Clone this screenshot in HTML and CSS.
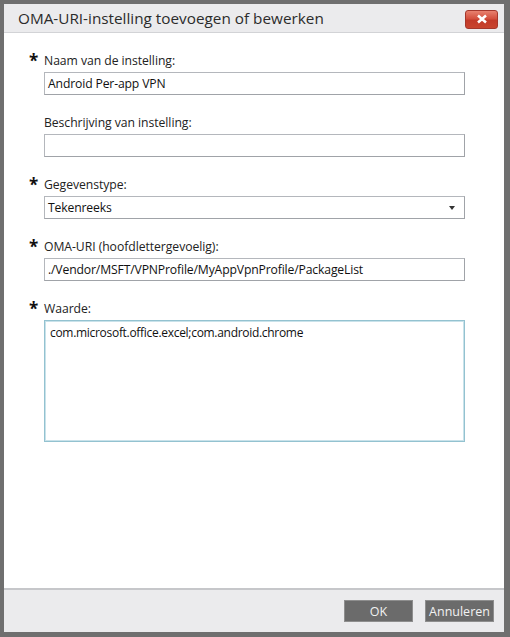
FILE: index.html
```html
<!DOCTYPE html>
<html lang="nl">
<head>
<meta charset="utf-8">
<title>OMA-URI-instelling</title>
<link rel="stylesheet" href="styles.css">
</head>
<body>
<div class="frame">
  <div class="titlebar">
    <div class="title">OMA-URI-instelling toevoegen of bewerken</div>
    <div class="close">
      <svg width="12" height="10" viewBox="0 0 12 10"><path d="M2 1.5 L10 8.5 M10 1.5 L2 8.5" stroke="#fff" stroke-width="2.6" stroke-linecap="butt"/></svg>
    </div>
  </div>
  <div class="content">
    <div class="field">
      <div class="label-row"><span class="req">*</span><span>Naam van de instelling:</span></div>
      <div class="input">Android Per-app VPN</div>
    </div>
    <div class="field">
      <div class="label-row"><span class="req"></span><span>Beschrijving van instelling:</span></div>
      <div class="input"></div>
    </div>
    <div class="field">
      <div class="label-row"><span class="req">*</span><span>Gegevenstype:</span></div>
      <div class="input select"><span>Tekenreeks</span><span class="arrow"></span></div>
    </div>
    <div class="field">
      <div class="label-row"><span class="req">*</span><span>OMA-URI (hoofdlettergevoelig):</span></div>
      <div class="input">./Vendor/MSFT/VPNProfile/MyAppVpnProfile/PackageList</div>
    </div>
    <div class="field">
      <div class="label-row"><span class="req">*</span><span>Waarde:</span></div>
      <div class="textarea">com.microsoft.office.excel;com.android.chrome</div>
    </div>
  </div>
  <div class="footer">
    <div class="btn ok">OK</div>
    <div class="btn">Annuleren</div>
  </div>
</div>
</body>
</html>
```
FILE: styles.css
```css
html, body {
  margin: 0;
  padding: 0;
}
body {
  width: 510px;
  height: 637px;
  font-family: "Segoe UI", "Open Sans", "Noto Sans", sans-serif;
  color: #222;
}
.frame {
  box-sizing: border-box;
  width: 510px;
  height: 637px;
  border-style: solid;
  border-color: #6f6f6f;
  border-width: 4px 6px 5px 4px;
  display: flex;
  flex-direction: column;
  background: #fff;
}
.titlebar {
  height: 28px;
  flex: none;
  background: #ebebed;
  border-bottom: 1px solid #d2d3d6;
  display: flex;
  align-items: center;
  justify-content: space-between;
  padding-left: 14px;
  padding-right: 6px;
}
.title {
  font-size: 15.3px;
  color: #2b2b2b;
}
.close {
  box-sizing: border-box;
  width: 33px;
  height: 19px;
  border: 1px solid #a4372c;
  border-radius: 3px;
  background: linear-gradient(#e8816f 0%, #d4503e 45%, #c23a29 55%, #c8452f 100%);
  display: flex;
  align-items: center;
  justify-content: center;
  margin-top: 2px;
}
.content {
  flex: 1;
  padding: 19px 0 0 40px;
  display: flex;
  flex-direction: column;
  gap: 19px;
}
.field {
  display: flex;
  flex-direction: column;
  gap: 4px;
}
.label-row {
  display: flex;
  align-items: center;
  margin-left: -15px;
  height: 16px;
  font-size: 12.2px;
  letter-spacing: -0.05px;
  color: #222;
}
.req {
  width: 15px;
  font-weight: bold;
  font-size: 17px;
  line-height: 16px;
  height: 16px;
  margin-top: 2px;
  color: #111;
  letter-spacing: 0;
}
.input {
  box-sizing: border-box;
  width: 421px;
  height: 23px;
  border: 1px solid #b4b7bc;
  border-right-color: #a0a3a8;
  border-bottom-color: #a0a3a8;
  font-size: 12.2px;
  letter-spacing: -0.15px;
  line-height: 21px;
  padding-left: 3px;
  color: #111;
}
.select {
  display: flex;
  justify-content: space-between;
  align-items: center;
  padding-right: 9px;
}
.arrow {
  width: 0;
  height: 0;
  border-left: 3px solid transparent;
  border-right: 3px solid transparent;
  border-top: 4px solid #333;
}
.textarea {
  box-sizing: border-box;
  width: 421px;
  height: 122px;
  border: 1px solid #93c2d0;
  box-shadow: inset 0 0 0 1px #c9e2ea;
  font-size: 12px;
  letter-spacing: -0.3px;
  padding: 4px 5px;
  line-height: 16px;
  color: #111;
}
.footer {
  height: 42px;
  flex: none;
  background: #ebebed;
  border-top: 2px solid #c6c7ca;
  display: flex;
  justify-content: flex-end;
  align-items: center;
  gap: 12px;
  padding-right: 10px;
}
.btn {
  box-sizing: border-box;
  height: 22px;
  width: 69px;
  background: #6b6b6b;
  border: 1px solid #8e8e8e;
  color: #f2f2f2;
  font-size: 12.5px;
  display: flex;
  align-items: center;
  justify-content: center;
}
```
